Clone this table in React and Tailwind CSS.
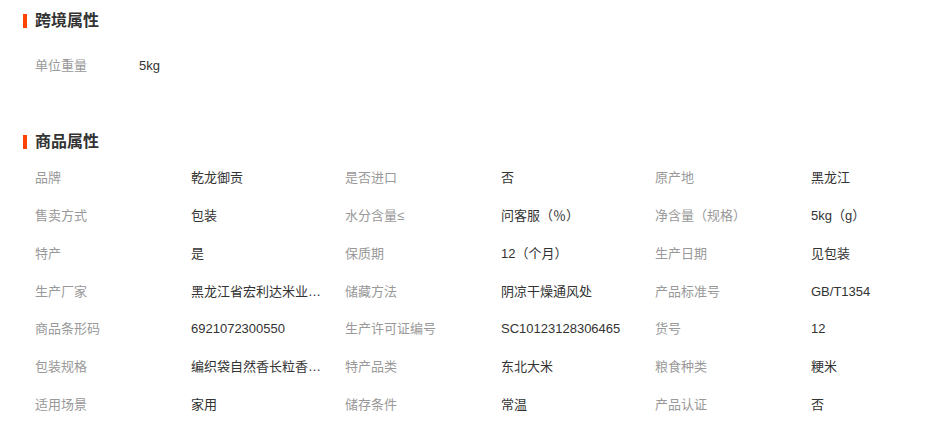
const crossBorder = [["单位重量", "5kg"]];

const attrs = [
  ["品牌", "乾龙御贡", "是否进口", "否", "原产地", "黑龙江"],
  ["售卖方式", "包装", "水分含量≤", "问客服（％）", "净含量（规格）", "5kg（g）"],
  ["特产", "是", "保质期", "12（个月）", "生产日期", "见包装"],
  ["生产厂家", "黑龙江省宏利达米业有限公司", "储藏方法", "阴凉干燥通风处", "产品标准号", "GB/T1354"],
  ["商品条形码", "6921072300550", "生产许可证编号", "SC10123128306465", "货号", "12"],
  ["包装规格", "编织袋自然香长粒香米5kg", "特产品类", "东北大米", "粮食种类", "粳米"],
  ["适用场景", "家用", "储存条件", "常温", "产品认证", "否"],
];

function SectionTitle({ children, className = "" }) {
  return (
    <div className={`flex items-center h-[22px] pl-[23px] ${className}`}>
      <span className="w-[4px] h-[14px] bg-[#ff4400]" />
      <h3 className="ml-[8px] text-[16px] leading-[22px] font-bold text-[#333]">
        {children}
      </h3>
    </div>
  );
}

export default function App() {
  return (
    <div
      className="w-[940px] h-[432px] bg-white overflow-hidden text-[13px]"
      style={{ fontFamily: '"Liberation Sans", "Noto Sans CJK SC", sans-serif' }}
    >
      {/* 跨境属性 */}
      <SectionTitle className="mt-[10px]">跨境属性</SectionTitle>
      <div className="mt-[15px] pl-[35px]">
        {crossBorder.map(([label, value]) => (
          <div key={label} className="flex items-center h-[38px]">
            <span className="w-[104px] text-[#999]">{label}</span>
            <span className="text-[#333]">{value}</span>
          </div>
        ))}
      </div>

      {/* 商品属性 */}
      <SectionTitle className="mt-[46px]">商品属性</SectionTitle>
      <div className="mt-[6px] pl-[35px]">
        {attrs.map((row, i) => (
          <div key={i} className="flex items-center h-[37.8px]">
            {[0, 2, 4].map((j) => (
              <div key={j} className="flex items-center">
                <span className="w-[156px] text-[#999] whitespace-nowrap">{row[j]}</span>
                <span className="w-[154px] text-[#333] overflow-hidden">
                  <span className="block max-w-[131px] truncate">{row[j + 1]}</span>
                </span>
              </div>
            ))}
          </div>
        ))}
      </div>
    </div>
  );
}
